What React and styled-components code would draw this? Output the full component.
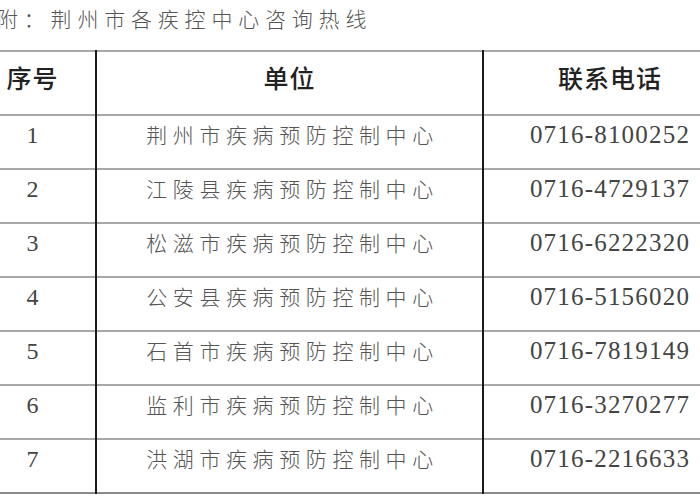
import React from 'react'
import styled, { createGlobalStyle } from 'styled-components'

const rows = [
  ['1', '荆州市疾病预防控制中心', '0716-8100252'],
  ['2', '江陵县疾病预防控制中心', '0716-4729137'],
  ['3', '松滋市疾病预防控制中心', '0716-6222320'],
  ['4', '公安县疾病预防控制中心', '0716-5156020'],
  ['5', '石首市疾病预防控制中心', '0716-7819149'],
  ['6', '监利市疾病预防控制中心', '0716-3270277'],
  ['7', '洪湖市疾病预防控制中心', '0716-2216633'],
]

function App() {
  return (
    <>
      <GlobalStyle />
      <Page>
        <Title>附：荆州市各疾控中心咨询热线</Title>
        <Table>
          <Row $header>
            <HeadCell>序号</HeadCell>
            <HeadCell $line>单位</HeadCell>
            <HeadCell $line>联系电话</HeadCell>
          </Row>
          {rows.map(([no, unit, phone]) => (
            <Row key={no}>
              <NumCell>{no}</NumCell>
              <UnitCell $line>{unit}</UnitCell>
              <PhoneCell $line>{phone}</PhoneCell>
            </Row>
          ))}
        </Table>
      </Page>
    </>
  )
}

export default App

const GlobalStyle = createGlobalStyle`
  html, body {
    margin: 0;
    padding: 0;
    background: #fff;
    overflow: hidden;
  }
`

const Page = styled.div`
  width: 700px;
  height: 500px;
  overflow: hidden;
  background: #fff;
`

const Title = styled.div`
  font-family: "Noto Sans CJK SC", sans-serif;
  font-weight: 300;
  font-size: 21px;
  line-height: 26px;
  letter-spacing: 5.8px;
  color: #555;
  margin-left: -3px;
  padding-top: 5px;
  height: 45px;
`

const Table = styled.div`
  margin-left: -30px;
  width: 766px;
  border-top: 2px solid #a8a8a8;
`

const Row = styled.div`
  display: grid;
  grid-template-columns: 125px 387px 254px;
  height: ${p => (p.$header ? '64px' : '54px')};
  border-bottom: 2px solid #a8a8a8;
  box-sizing: border-box;
  &:last-child {
    border-bottom-color: #8a8a8a;
  }
`

const Cell = styled.div`
  text-align: center;
  border-left: ${p => (p.$line ? '2px solid #1a1a1a' : 'none')};
  box-sizing: border-box;
  margin-top: -2px;
  margin-bottom: -2px;
  white-space: nowrap;
`

const HeadCell = styled(Cell)`
  font-family: "Noto Sans CJK SC", sans-serif;
  font-weight: 500;
  font-size: 25px;
  line-height: 30px;
  color: #222;
  padding-top: 12px;
  letter-spacing: 1px;
`

const NumCell = styled(Cell)`
  font-family: "Liberation Serif", serif;
  font-size: 24px;
  line-height: 28px;
  color: #444;
  padding-top: 7px;
`

const UnitCell = styled(Cell)`
  font-family: "Noto Sans CJK SC", sans-serif;
  font-weight: 300;
  font-size: 21px;
  line-height: 28px;
  letter-spacing: 5.6px;
  color: #555;
  padding-top: 6px;
  padding-left: 6px;
`

const PhoneCell = styled(Cell)`
  font-family: "Liberation Serif", serif;
  font-size: 25px;
  line-height: 28px;
  letter-spacing: 1.2px;
  color: #444;
  padding-top: 7px;
`
